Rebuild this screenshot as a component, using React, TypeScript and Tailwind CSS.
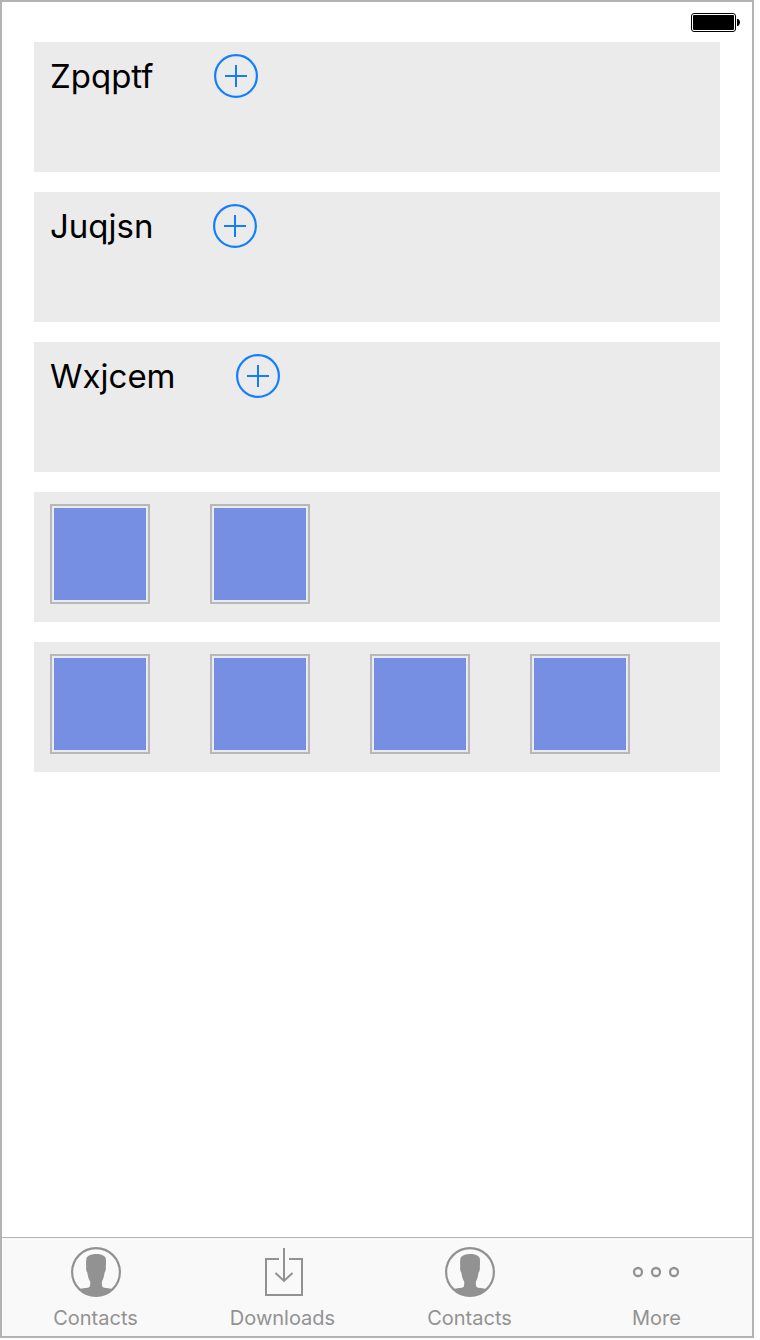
import type { ReactNode } from "react";

function Battery() {
  return (
    <svg className="h-5 w-[50px]" viewBox="0 0 50 20" role="img" aria-label="Battery full">
      <rect x="1.5" y="1.5" width="44" height="18" rx="2.5" fill="#fff" stroke="#000" />
      <rect x="3" y="3" width="41" height="15" rx="1" fill="#000" />
      <path d="M47 7h1.2q1.8 1 1.8 3.3t-1.8 3.7H47z" fill="#000" />
    </svg>
  );
}

function AddIcon() {
  return (
    <svg className="size-11" viewBox="0 0 44 44" fill="none" stroke="#127eff" strokeWidth="2" aria-hidden="true">
      <circle cx="22" cy="22" r="20.9" strokeWidth="2.2" />
      <path d="M11 22h22M22 11v22" />
    </svg>
  );
}

function ContactIcon() {
  return (
    <svg className="size-[50px]" viewBox="0 0 50 50" aria-hidden="true">
      <circle cx="25" cy="25" r="23.9" fill="none" stroke="#929292" strokeWidth="2.2" />
      <path
        d="M8 42.5C12 40.8 16.5 41.3 18.4 40C19.2 39.3 19.3 37 19.2 34.5C17.6 32.500 16.800 29 16.300 25.500C15.200 24.300 14.900 22 15.200 20C15 16.500 15 13.500 15.500 11C17 8.300 21 7 25.500 7C30 7 33.500 8.600 34.700 11C35.200 14 35 17 34.800 20C35.100 22 34.700 24.300 33.600 25.500C33.100 29 32.300 32.500 30.900 34.500C30.800 37 30.900 39.300 31.700 40C33.500 41.300 38 40.800 42 42.500C37.500 47 32 49 25 49C18 49 12.500 47 8 42.500Z"
        fill="#929292"
      />
    </svg>
  );
}

function DownloadIcon() {
  return (
    <svg className="size-[50px]" viewBox="0 0 50 50" fill="none" stroke="#929292" strokeWidth="2" aria-hidden="true">
      <path d="M21 12H8v36h36V12H31" />
      <path d="M26 1v33M17.500 26l8.500 8l8.500-8" />
    </svg>
  );
}

function MoreIcon() {
  return (
    <svg className="size-[50px]" viewBox="0 0 50 50" fill="none" stroke="#929292" strokeWidth="2.3" aria-hidden="true">
      <circle cx="6" cy="25" r="4" />
      <circle cx="24" cy="25" r="4" />
      <circle cx="42" cy="25" r="4" />
    </svg>
  );
}

function Row({ children }: { children: ReactNode }) {
  return <section className="flex min-h-[130px] items-start gap-15 bg-[#ebebeb] px-4 py-3">{children}</section>;
}

function Tile() {
  return (
    <div className="size-[100px] border-2 border-[#b8b8b8] bg-[#e8eaf4] p-0.5">
      <div className="size-full bg-[#768fe2]" />
    </div>
  );
}

const names = ["Zpqptf", "Juqjsn", "Wxjcem"];
const tileRows = [2, 4];
const tabs = [
  { id: "contacts", label: "Contacts", icon: <ContactIcon /> },
  { id: "downloads", label: "Downloads", icon: <DownloadIcon /> },
  { id: "people", label: "Contacts", icon: <ContactIcon /> },
  { id: "more", label: "More", icon: <MoreIcon /> },
];

export default function App() {
  return (
    <div className="min-h-screen bg-white pr-1.5 pb-0.5 font-['Inter',sans-serif]">
      <div className="flex min-h-[calc(100vh-2px)] flex-col border-2 border-[#b3b3b3]">
        <header className="flex h-10 items-start justify-end px-3 pt-2.5">
          <Battery />
        </header>
        <main className="flex grow flex-col gap-5 px-8 pb-5">
          {names.map((name) => (
            <Row key={name}>
              <h2 className="text-[33px] leading-11 text-black">{name}</h2>
              <button type="button" aria-label={`Add to ${name}`}>
                <AddIcon />
              </button>
            </Row>
          ))}
          {tileRows.map((count) => (
            <Row key={count}>
              {Array.from({ length: count }, (_, i) => (
                <Tile key={i} />
              ))}
            </Row>
          ))}
        </main>
        <nav className="grid grid-cols-4 border-t border-[#b3b3b3] bg-[#f9f9f9] pr-0.5">
          {tabs.map((tab) => (
            <button
              key={tab.id}
              type="button"
              className="flex flex-col items-center gap-2 pt-[9px] pb-[5px] text-xl leading-[26px] text-[#929292]"
            >
              {tab.icon}
              <span>{tab.label}</span>
            </button>
          ))}
        </nav>
      </div>
    </div>
  );
}
